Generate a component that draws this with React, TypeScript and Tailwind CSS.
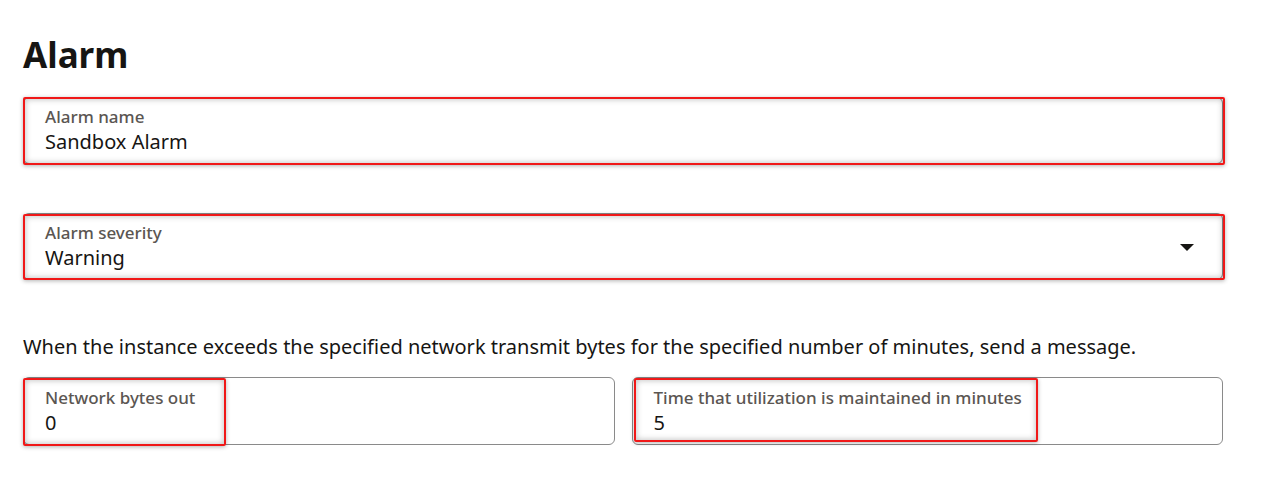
import React from 'react';

const Field: React.FC<{ label: string; value: string; select?: boolean; mark?: string; tall?: boolean }> = ({ label, value, select, mark, tall }) => {
    return (
        <div className={`relative rounded-md border border-[#8a8a8a] bg-white ${tall ? 'h-[68px]' : 'h-[67px]'}`}>
            <div className="flex h-full items-center pl-[21px] pr-[28px]">
                <div className="flex flex-1 flex-col">
                    <span className="text-[17px] font-medium leading-[22px] text-[#5b5652]">{label}</span>
                    <span className="text-[20px] leading-[27px] text-[#161513]">{value}</span>
                </div>
                {select && (
                    <svg width="14" height="8" viewBox="0 0 14 8" className="mt-[2px]">
                        <path d="M0 0 H14 L7 7 Z" fill="#161513" />
                    </svg>
                )}
            </div>
            {mark && (
                <div
                    className={`absolute left-[-1px] rounded-[2px] border-2 border-[#f01818] shadow-[inset_0_0_6px_rgba(0,0,0,0.28),0_1px_4px_rgba(0,0,0,0.3)] ${mark}`}
                />
            )}
        </div>
    );
};

export default function App() {
    return (
        <div className="min-h-[481px] bg-white px-[23px] pt-[30px] font-['Noto_Sans',sans-serif]" style={{ width: 1266 }}>
            <div className="w-[1200px]">
                <h1 className="text-[35px] font-bold leading-[50px] text-[#161513]">Alarm</h1>
                <div className="mt-[17px]">
                    <Field label="Alarm name" value="Sandbox Alarm" mark="w-[1202px] h-[68px] top-[-1px]" />
                </div>
                <div className="mt-[49px]">
                    <Field label="Alarm severity" value="Warning" select mark="w-[1202px] h-[66px] top-[0px]" />
                </div>
                <p className="mt-[53px] text-[20px] leading-[28px] text-[#161513]">
                    When the instance exceeds the specified network transmit bytes for the specified number of minutes, send a message.
                </p>
                <div className="mt-[16px] grid grid-cols-2 gap-[17px]">
                    <Field tall label="Network bytes out" value="0" mark="w-[203px] h-[68px] top-[0px]" />
                    <Field tall label="Time that utilization is maintained in minutes" value="5" mark="w-[404px] h-[64px] top-[0px] left-[1px]" />
                </div>
            </div>
        </div>
    );
}
